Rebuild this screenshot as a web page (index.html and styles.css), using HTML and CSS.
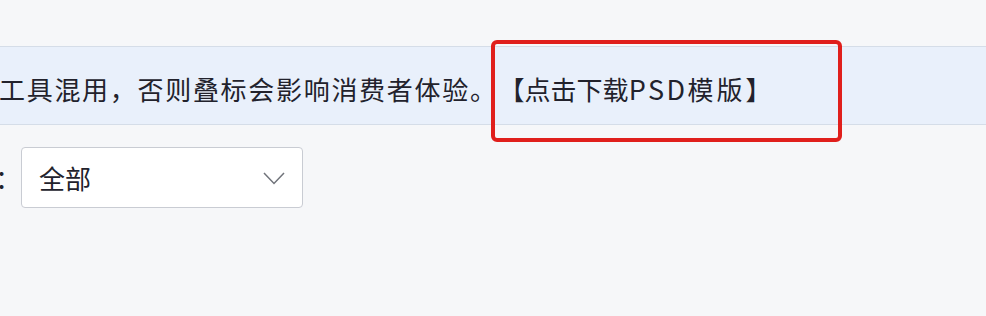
FILE: index.html
```html
<!DOCTYPE html>
<html lang="zh-CN">
<head>
<meta charset="utf-8">
<title>提示</title>
<link rel="stylesheet" href="styles.css">
</head>
<body>
<div class="page">
  <div class="notice">
    <p class="notice-text"><span class="notice-main">工具混用，否则叠标会影响消费者体验。</span><a class="notice-link">【点击下载<span class="latin">PSD</span><span class="tail">模版</span>】</a></p>
  </div>
  <div class="filter-row">
    <span class="filter-label">：</span>
    <div class="select">
      <span class="select-value">全部</span>
      <svg class="select-arrow" width="22" height="13" viewBox="0 0 22 13"><polyline points="1,1 11,11.5 21,1" fill="none" stroke="#70737a" stroke-width="1.5" stroke-linejoin="miter"/></svg>
    </div>
  </div>
  <div class="highlight-box"></div>
</div>
</body>
</html>
```

FILE: styles.css
```css
html, body {
  margin: 0;
  padding: 0;
  background: #f6f7f9;
}
body {
  font-family: "Noto Sans CJK SC", "Noto Sans", sans-serif;
  color: #22222c;
  width: 986px;
  height: 316px;
  overflow: hidden;
}
.page {
  position: relative;
  padding-top: 46px;
  height: 270px;
}
.notice {
  background: #e9f0fb;
  border-top: 1px solid #d5dde8;
  border-bottom: 1px solid #d5dde8;
  height: 77px;
  box-sizing: content-box;
}
.notice-text {
  margin: 0;
  padding-top: 29px;
  margin-left: -1px;
  font-size: 26px;
  line-height: 26px;
  white-space: nowrap;
}
.notice-main {
  letter-spacing: 1.7px;
}
.notice-link {
  color: #22222c;
  margin-left: 14px;
}
.latin {
  font-size: 27px;
  letter-spacing: 2.5px;
}
.tail {
  letter-spacing: 3px;
}
.filter-row {
  display: flex;
  align-items: center;
  margin-top: 22px;
}
.filter-label {
  font-size: 26px;
  line-height: 26px;
  margin-left: -5px;
  width: 26px;
}
.select {
  box-sizing: border-box;
  width: 282px;
  height: 61px;
  background: #fff;
  border: 1px solid #c9ccd3;
  border-radius: 4px;
  display: flex;
  align-items: center;
  justify-content: space-between;
  padding: 0 17px 0 17px;
}
.select-value {
  font-size: 26px;
  line-height: 26px;
}
.select-arrow {
  display: block;
  margin-top: 1px;
}
.highlight-box {
  position: absolute;
  left: 491px;
  top: 40px;
  width: 351px;
  height: 102px;
  box-sizing: border-box;
  border: 4px solid #e01f1c;
  border-radius: 6px;
}
```
